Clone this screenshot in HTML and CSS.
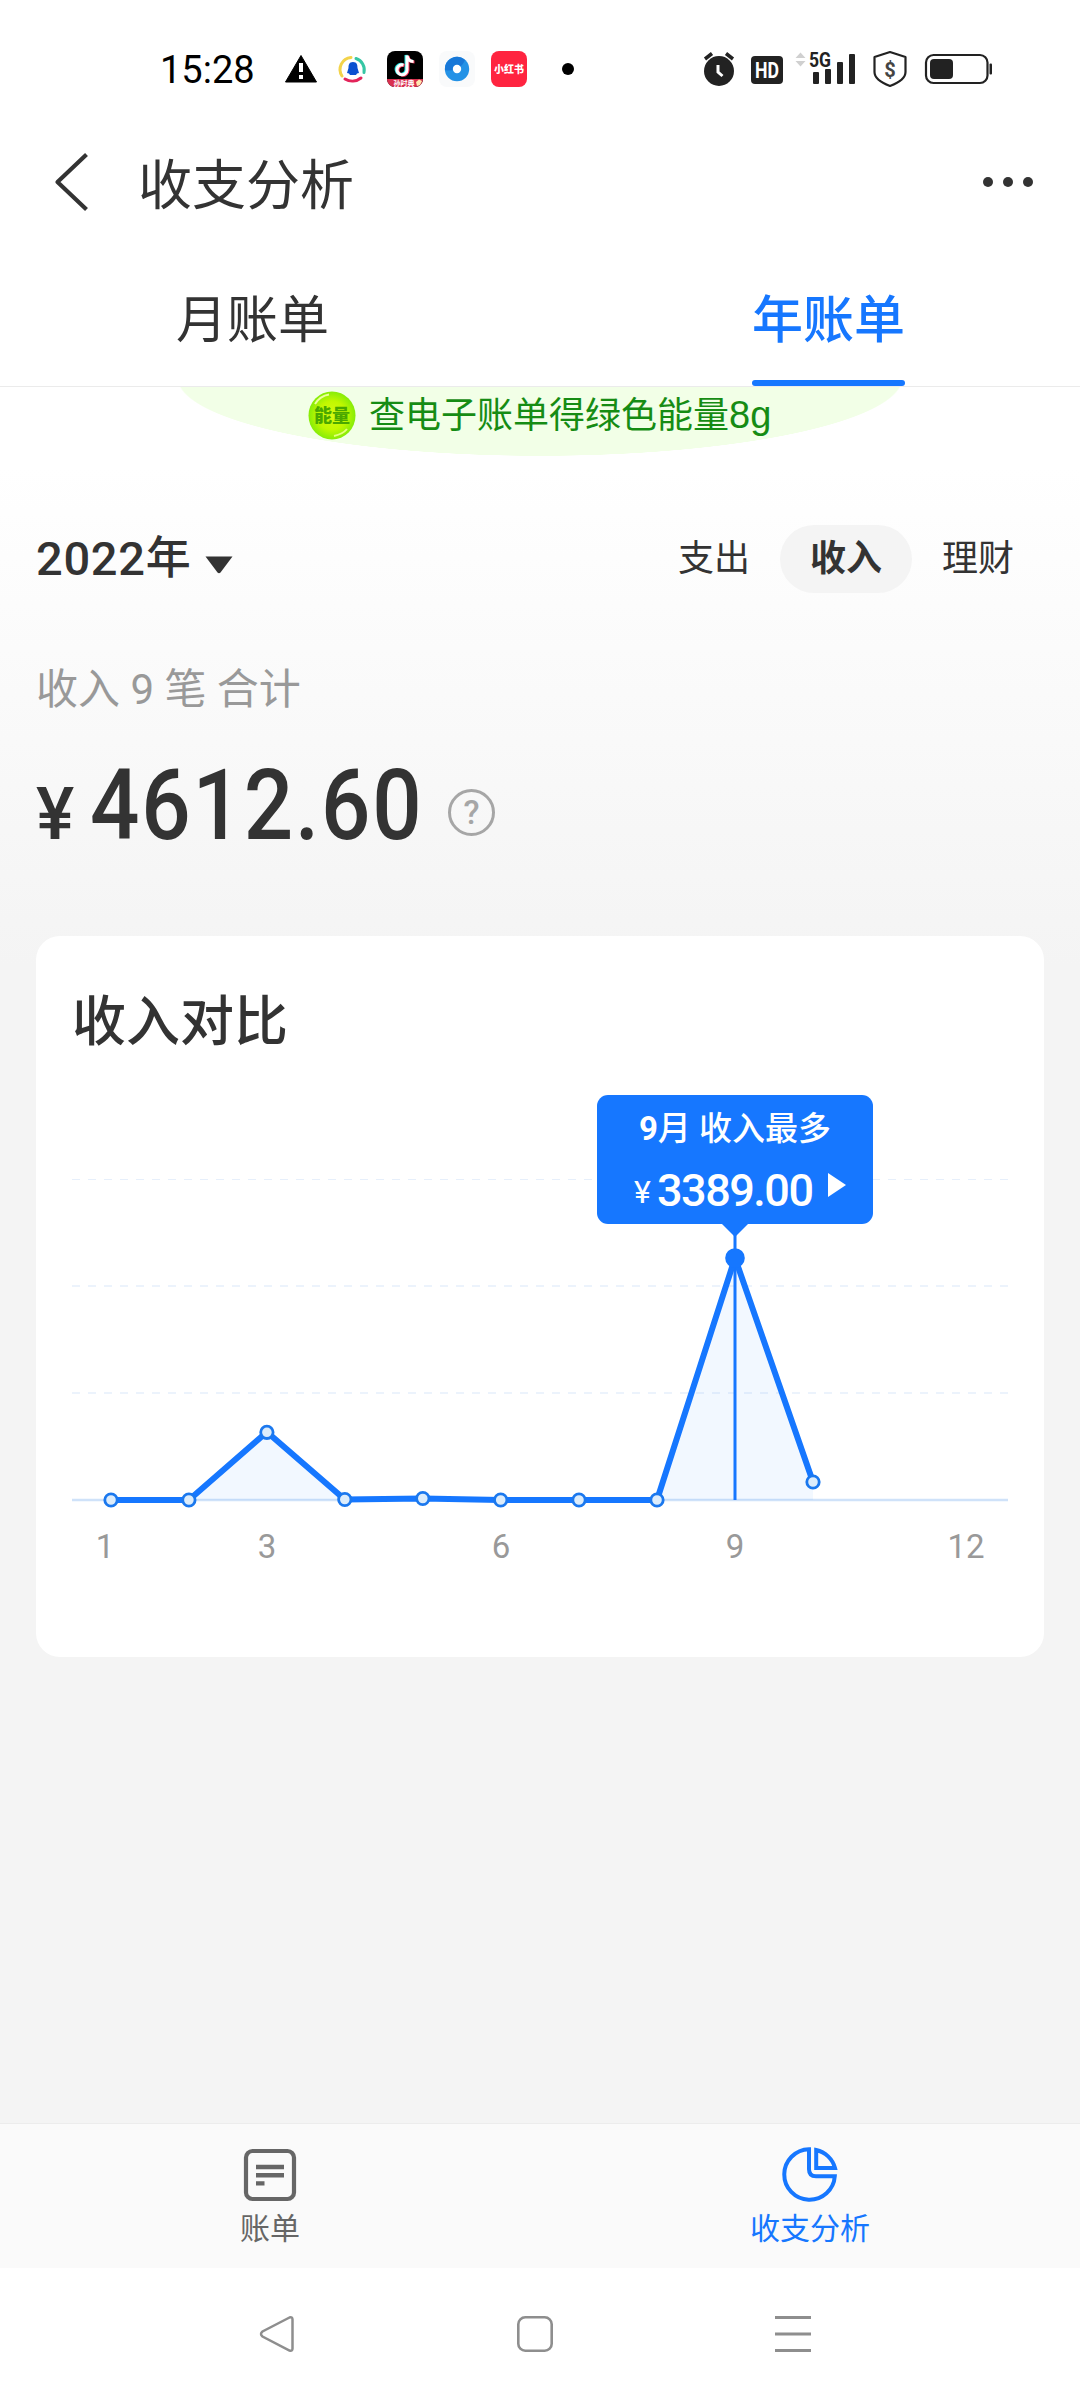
FILE: index.html
```html
<!DOCTYPE html>
<html lang="zh-CN">
<head>
<meta charset="utf-8">
<title>收支分析</title>
<link rel="stylesheet" href="styles.css">
</head>
<body>
<div class="screen">
  <header class="status">
    <span class="clock">15:28</span>
    <svg class="status-left" width="300" height="44" viewBox="280 47 300 44">
      <path d="M301 55.500L316.500 82h-31z" fill="#000" stroke="#000" stroke-width="1" stroke-linejoin="round"/>
      <path d="M299 63h4v9h-4zM299 75h4v4h-4z" fill="#fff"/>
      <g fill="none" stroke-width="3" stroke-linecap="round">
        <path d="M342 76a12 12 0 0 1 9-18.500" stroke="#f3d34a"/>
        <path d="M356 58.500a12 12 0 0 1 8 14" stroke="#36c6a4"/>
        <path d="M345 79a14 14 0 0 0 16-1" stroke="#e3245a"/>
      </g>
      <path d="M353 62c-4 0-4.500 3-4.500 6l-1.500 5 2 .5 1 1.500h6l1-1.500 2-.5-1.500-5c0-3-.5-6-4.500-6z" fill="#0b50d0"/>
      <rect x="387" y="51" width="36" height="36" rx="8" fill="#000"/>
      <path d="M387 79h36a8 8 0 0 1-8 8h-20a8 8 0 0 1-8-8z" fill="#d9304f"/>
      <path d="M416 82l3-2.500 3 1.500-2 4-3 1z" fill="#ffe9b0"/>
      <g fill="none" stroke-width="3">
        <path d="M402.500 64.500a5 5 0 1 0 3.500 5V55c.5 4 3 6 6.500 6" stroke="#25e4e0"/>
        <path d="M404.500 65.500a5 5 0 1 0 3.500 5V56c.5 4 3 6 6.500 6" stroke="#fb3a5d"/>
        <path d="M403.500 65a5 5 0 1 0 3.500 5V55.500c.5 4 3 6 6.500 6" stroke="#fff"/>
      </g>
      <text x="404" y="85.500" class="tiny">孙时典</text>
      <rect x="439" y="51" width="36" height="36" rx="8" fill="#f9fafb"/>
      <circle cx="457" cy="69" r="12.200" fill="#2492e6"/>
      <path d="M445 70a12 12 0 0 1 20-10c-3 8-12 12-20 10z" fill="#1878d8"/>
      <circle cx="457" cy="69" r="4.200" fill="#fff"/>
      <rect x="491" y="51" width="36" height="36" rx="8" fill="#ff2440"/>
      <text x="509" y="73" class="red-label">小红书</text>
      <circle cx="568" cy="69" r="6" fill="#000"/>
    </svg>
    <svg class="status-right" width="300" height="44" viewBox="700 47 300 44">
      <circle cx="719" cy="71" r="15" fill="#222"/>
      <path d="M705 59l7-5.500M733 59l-7-5.500" stroke="#222" stroke-width="3.500" fill="none"/>
      <path d="M718 65v7l4.500 4" stroke="#fff" stroke-width="3" fill="none"/>
      <rect x="751" y="56" width="32" height="28" rx="4" fill="#222"/>
      <text x="767" y="77.500" class="hd" textLength="24" lengthAdjust="spacingAndGlyphs">HD</text>
      <path d="M800.500 52.500l5 5.500h-10zM800.500 66.500l5-5.500h-10z" fill="#d0d0d0"/>
      <text x="820" y="67" class="net" textLength="22" lengthAdjust="spacingAndGlyphs">5G</text>
      <g fill="#222">
        <rect x="813" y="72" width="6" height="12" rx="1"/>
        <rect x="825" y="69" width="6" height="15" rx="1"/>
        <rect x="837" y="62" width="6" height="22" rx="1"/>
        <rect x="849" y="54" width="6" height="30" rx="1"/>
      </g>
      <path d="M890 52l15.500 5v15c0 6-6 10.500-15.500 14-9.500-3.500-15.500-8-15.500-14V57z" fill="none" stroke="#222" stroke-width="2.200" stroke-linejoin="round"/>
      <text x="890" y="76.500" class="coin">$</text>
      <rect x="926" y="55" width="61.500" height="28" rx="7.500" fill="none" stroke="#222" stroke-width="2.200"/>
      <rect x="930" y="59" width="23" height="20" rx="4" fill="#222"/>
      <rect x="989.500" y="63.500" width="2.500" height="11" rx="1" fill="#222"/>
    </svg>
  </header>

  <div class="title-bar">
    <svg class="back" width="36" height="60" viewBox="0 0 36 60"><path d="M32.500 2.500L3.500 30l29 27.500" fill="none" stroke="#333" stroke-width="4.200" stroke-linejoin="round"/></svg>
    <h1 class="title">收支分析</h1>
    <div class="more"><i></i><i></i><i></i></div>
  </div>

  <nav class="tabs">
    <span class="tab">月账单</span>
    <span class="tab tab-on">年账单</span>
  </nav>

  <main class="content">
    <div class="energy">
      <svg class="energy-ball" width="48" height="49" viewBox="0 0 48 49">
        <defs><radialGradient id="ball"><stop offset="0" stop-color="#d8fb12"/><stop offset=".6" stop-color="#c0f800"/><stop offset="1" stop-color="#86ec08"/></radialGradient></defs>
        <ellipse cx="24" cy="24.500" rx="23.500" ry="24" fill="url(#ball)"/>
        <path d="M7 13Q12 5 21 3.500" stroke="#ecffa0" stroke-width="2" fill="none"/>
        <path d="M26 45Q35 43 39 38" stroke="#e4ff80" stroke-width="2" fill="none"/>
        <text x="24" y="31" class="ball-text">能量</text>
      </svg>
      <span>查电子账单得绿色能量<span class="grams">8g</span></span>
    </div>

    <div class="filter">
      <div class="year"><span class="year-num">2022</span><span>年</span><svg class="caret" width="28" height="18" viewBox="0 0 28 18"><path d="M.5 .5h27L15.500 16.500q-1.500 1.500-3 0z" fill="#333"/></svg></div>
      <div class="kinds"><span class="kind">支出</span><span class="kind kind-on">收入</span><span class="kind">理财</span></div>
    </div>

    <p class="summary">收入 9 笔 合计</p>
    <div class="total">
      <span class="yen">¥</span><span class="amount">4612.60</span>
      <span class="help">?</span>
    </div>

    <section class="card">
      <h2 class="card-title">收入对比</h2>
      <div class="chart">
        <svg class="plot" width="936" height="480" viewBox="72 1090 936 480">
          <g stroke="#e6effb" stroke-width="1.500" stroke-dasharray="8 8">
            <path d="M72 1179.500H1008" stroke-width="1"/>
            <path d="M72 1286H1008"/>
            <path d="M72 1393H1008"/>
          </g>
          <path d="M72 1500H1008" stroke="#cfe2f9" stroke-width="2.500"/>
          <path d="M111 1500H188.900L266.900 1432L344.800 1499.500L422.800 1498.500L500.700 1500H657L735 1258L813 1482V1500z" fill="#1677ff" fill-opacity=".055"/>
          <path d="M735 1230V1500" stroke="#1677ff" stroke-width="3"/>
          <path d="M111 1500H188.900L266.900 1432L344.800 1499.500L422.800 1498.500L500.700 1500H657L735 1258L813 1482" fill="none" stroke="#1677ff" stroke-width="6" stroke-linejoin="round"/>
          <g fill="#dcecfb" stroke="#1b78ee" stroke-width="2.800">
            <circle cx="111" cy="1500" r="6.200"/><circle cx="188.900" cy="1500" r="6.200"/><circle cx="266.900" cy="1432.300" r="6.200"/><circle cx="344.800" cy="1499.500" r="6.200"/><circle cx="422.800" cy="1498.500" r="6.200"/><circle cx="500.700" cy="1500" r="6.200"/><circle cx="579" cy="1500" r="6.200"/><circle cx="657" cy="1500" r="6.200"/><circle cx="813" cy="1482" r="6.200"/>
          </g>
          <circle cx="735" cy="1258" r="9.800" fill="#1677ff"/>
          <g class="axis">
            <text x="105" y="1558">1</text><text x="267" y="1558">3</text><text x="501" y="1558">6</text><text x="735" y="1558">9</text><text x="966" y="1558">12</text>
          </g>
        </svg>
        <div class="tip">
          <div class="tip-title"><b>9</b>月 收入最多</div>
          <div class="tip-value"><span class="tip-yen">¥</span><span class="tip-num">3389.00</span><svg class="tip-play" width="18" height="24" viewBox="0 0 18 24"><path d="M0 0l18 12L0 24z" fill="#fff"/></svg></div>
        </div>
      </div>
    </section>
  </main>

  <nav class="bottom">
    <a class="dock">
      <svg width="56" height="56" viewBox="0 0 56 56"><rect x="4" y="4" width="48" height="48" rx="6.500" fill="none" stroke="#666" stroke-width="4.200"/><path d="M14 20h28M14 28.200h28M14 36.400h8.500" stroke="#666" stroke-width="4.400"/></svg>
      <span>账单</span>
    </a>
    <a class="dock dock-on">
      <svg width="56" height="56" viewBox="0 0 56 56"><g fill="none" stroke="#1677ff" stroke-width="4"><path d="M27 2.200A25.300 25.300 0 1 0 52.800 29.200H34q-7 0-7-7z"/><path d="M34.200 3v18H53A25 25 0 0 0 34.200 3z"/></g></svg>
      <span>收支分析</span>
    </a>
  </nav>

  <footer class="system">
    <svg width="36" height="38" viewBox="0 0 36 38"><path d="M30.500 2.500L3.500 16.500q-3 2.500 0 5L30.500 35.500q3 1 3-2V4.500q0-3-3-2z" fill="none" stroke="#8e8e8e" stroke-width="2.500"/></svg>
    <svg width="36" height="38" viewBox="0 0 36 38"><rect x="1.300" y="2.300" width="33.400" height="33.400" rx="7" fill="none" stroke="#8e8e8e" stroke-width="2.600"/></svg>
    <svg width="36" height="38" viewBox="0 0 36 38"><path d="M0 2.500h36M0 19h36M0 35.500h36" stroke="#8e8e8e" stroke-width="3"/></svg>
  </footer>
</div>
</body>
</html>
```
FILE: styles.css
```css
* { box-sizing: border-box; }
body {
  margin: 0;
  font-family: Roboto, "Noto Sans CJK SC", sans-serif;
  color: #333;
}
h1, h2, p { margin: 0; font-weight: 400; }
svg { display: block; flex: none; }
.screen {
  width: 1080px;
  height: 2400px;
  display: flex;
  flex-direction: column;
  overflow: hidden;
  background: #fff;
}

.status {
  height: 138px;
  padding-left: 160px;
  display: flex;
  align-items: center;
}
.clock {
  width: 120px;
  padding-top: 2px;
  font-size: 38px;
  line-height: 44px;
  color: #000;
}
.status-right { margin-left: 120px; }
.tiny { font: 700 7px "Noto Sans CJK SC", sans-serif; fill: #fff; text-anchor: middle; }
.red-label { font: 900 10px "Noto Sans CJK SC", sans-serif; fill: #fff; text-anchor: middle; }
.hd { font: 700 22px Roboto, sans-serif; fill: #fff; text-anchor: middle; }
.net { font: 700 20px Roboto, sans-serif; fill: #222; text-anchor: middle; }
.coin { font: 700 20px Roboto, sans-serif; fill: #444; text-anchor: middle; }

.title-bar {
  height: 88px;
  padding: 0 47px 0 54px;
  display: flex;
  align-items: center;
}
.title {
  flex: 1;
  margin-left: 48px;
  padding-top: 9px;
  font-size: 54px;
  line-height: 80px;
}
.more { display: flex; gap: 10px; }
.more i { width: 10px; height: 10px; border-radius: 50%; background: #333; }

.tabs {
  height: 161px;
  padding: 0 175px 0 176px;
  display: flex;
  justify-content: space-between;
  border-bottom: 1px solid #ebebeb;
}
.tab {
  height: 160px;
  padding-top: 58px;
  font-size: 51px;
  line-height: 74px;
}
.tab-on {
  position: relative;
  color: #1677ff;
  font-weight: 500;
}
.tab-on::after {
  content: "";
  position: absolute;
  left: 0;
  right: 0;
  bottom: 0;
  height: 6px;
  border-radius: 3px;
  background: #1677ff;
}

.content {
  height: 1736px;
  padding: 0 36px;
  background: linear-gradient(#fff 80px, #f4f4f4 580px);
}
.energy {
  width: 720px;
  height: 69px;
  margin: 0 auto;
  padding: 0 0 12px 128px;
  display: flex;
  align-items: center;
  gap: 13px;
  background: radial-gradient(363px 78px at 50% -9px, #f2ffe7 99.500%, transparent 100%);
  color: #168c14;
  font: 36px/50px "Liberation Sans", "Noto Sans CJK SC", sans-serif;
  white-space: nowrap;
}
.grams { font-size: 38px; }
.ball-text { font: 900 18px "Noto Sans CJK SC", sans-serif; fill: #4aa800; text-anchor: middle; }

.filter {
  height: 68px;
  margin-top: 69px;
  display: flex;
  justify-content: space-between;
  align-items: center;
}
.year {
  display: flex;
  align-items: center;
  font-size: 45px;
  line-height: 66px;
  font-weight: 500;
}
.year-num { font-size: 47px; letter-spacing: 0.7px; }
.caret { margin: 12px 0 0 14px; }
.kinds { display: flex; }
.kind {
  height: 68px;
  padding: 0 30px;
  border-radius: 34px;
  font-size: 36px;
  line-height: 68px;
}
.kind-on { background: #f4f4f4; font-weight: 700; }

.summary {
  margin-top: 66px;
  font-size: 42px;
  line-height: 62px;
  color: #999;
}
.total {
  height: 110px;
  margin-top: 30px;
  display: flex;
  align-items: baseline;
  font-weight: 500;
}
.yen { width: 54px; font-size: 72px; line-height: 110px; }
.amount {
  width: 358px;
  font-size: 98px;
  line-height: 110px;
  letter-spacing: 2px;
  transform: scaleX(0.888);
  transform-origin: 0 0;
}
.help {
  align-self: flex-start;
  width: 47px;
  height: 47px;
  margin-top: 38px;
  border: 3px solid #a6a6a6;
  border-radius: 50%;
  color: #a6a6a6;
  font-size: 33px;
  line-height: 41px;
  text-align: center;
}

.card {
  height: 721px;
  margin-top: 75px;
  padding: 47px 36px 0;
  border-radius: 24px;
  background: #fff;
}
.card-title { font-size: 54px; line-height: 80px; font-weight: 500; }
.chart { position: relative; margin-top: 27px; }
.axis { font: 33px Roboto, sans-serif; fill: #999; text-anchor: middle; }
.tip {
  position: absolute;
  left: 525px;
  top: 5px;
  width: 276px;
  height: 129px;
  padding-top: 10px;
  border-radius: 11px;
  background: #1677ff;
  color: #fff;
  text-align: center;
}
.tip::after {
  content: "";
  position: absolute;
  left: 124px;
  top: 128px;
  border: 14px solid transparent;
  border-top-color: #1677ff;
  border-bottom: 0;
}
.tip-title { font-size: 33px; line-height: 48px; font-weight: 500; }
.tip-title b { font-weight: 700; }
.tip-value {
  margin-top: 10px;
  padding-left: 37px;
  display: flex;
  align-items: baseline;
  line-height: 56px;
}
.tip-yen { width: 23px; font-size: 32px; text-align: left; position: relative; top: -3px; }
.tip-num { width: 171px; font-size: 45px; font-weight: 500; letter-spacing: -1.500px; text-align: left; }
.tip-play { align-self: flex-start; margin-top: 10px; }

.bottom {
  height: 145px;
  border-top: 1px solid #ececec;
  background: #fafafa;
  display: grid;
  grid-template-columns: 1fr 1fr;
}
.dock {
  padding-top: 23px;
  display: flex;
  flex-direction: column;
  align-items: center;
  gap: 4px;
  font-size: 30px;
  line-height: 44px;
  color: #666;
}
.dock-on { color: #1677ff; }
.system {
  flex: 1;
  padding: 47px 269px 0 259px;
  display: flex;
  justify-content: space-between;
}
```
